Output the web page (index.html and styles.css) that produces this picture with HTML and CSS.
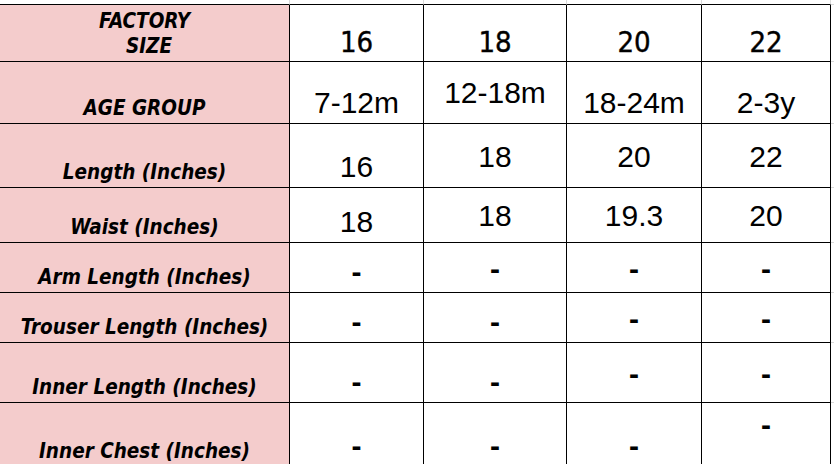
FILE: index.html
```html
<!DOCTYPE html>
<html>
<head>
<meta charset="utf-8">
<link rel="stylesheet" href="styles.css">
</head>
<body>
<div class="sheet">
  <div class="cell top"></div>
  <div class="cell top"></div>
  <div class="cell top"></div>
  <div class="cell top"></div>
  <div class="cell top"></div>
  <div class="cell top edge"></div>

  <div class="cell label">FACTORY<br><span class="indent">SIZE</span></div>
  <div class="cell head">16</div>
  <div class="cell head">18</div>
  <div class="cell head">20</div>
  <div class="cell head">22</div>
  <div class="cell edge"></div>

  <div class="cell label">AGE GROUP</div>
  <div class="cell val">7-12m</div>
  <div class="cell val up15">12-18m</div>
  <div class="cell val">18-24m</div>
  <div class="cell val">2-3y</div>
  <div class="cell edge"></div>

  <div class="cell label">Length (Inches)</div>
  <div class="cell val">16</div>
  <div class="cell val up15">18</div>
  <div class="cell val up15">20</div>
  <div class="cell val up15">22</div>
  <div class="cell edge"></div>

  <div class="cell label">Waist (Inches)</div>
  <div class="cell val">18</div>
  <div class="cell val up11">18</div>
  <div class="cell val up11">19.3</div>
  <div class="cell val up11">20</div>
  <div class="cell edge"></div>

  <div class="cell label">Arm Length (Inches)</div>
  <div class="cell val dash">-</div>
  <div class="cell val dash up8">-</div>
  <div class="cell val dash up8">-</div>
  <div class="cell val dash up8">-</div>
  <div class="cell edge"></div>

  <div class="cell label">Trouser Length (Inches)</div>
  <div class="cell val dash">-</div>
  <div class="cell val dash">-</div>
  <div class="cell val dash up8">-</div>
  <div class="cell val dash up8">-</div>
  <div class="cell edge"></div>

  <div class="cell label">Inner Length (Inches)</div>
  <div class="cell val dash">-</div>
  <div class="cell val dash">-</div>
  <div class="cell val dash up13">-</div>
  <div class="cell val dash up13">-</div>
  <div class="cell edge"></div>

  <div class="cell label">Inner Chest (Inches)</div>
  <div class="cell val dash">-</div>
  <div class="cell val dash">-</div>
  <div class="cell val dash">-</div>
  <div class="cell val dash up26">-</div>
  <div class="cell edge"></div>
</div>
</body>
</html>
```
FILE: styles.css
```css
body {
  margin: 0;
  background: #ffffff;
}

.sheet {
  display: grid;
  grid-template-columns: 290px 134px 143px 135px 129px 1fr;
  grid-template-rows: 5px 57px 62px 64px 55px 50px 50px 60px 64px;
  color: #000;
}

.cell {
  box-sizing: border-box;
  border-right: 1px solid #000;
  border-bottom: 1px solid #000;
  display: flex;
  flex-direction: column;
  justify-content: flex-end;
  align-items: center;
  text-align: center;
  overflow: hidden;
  white-space: nowrap;
}

.top {
  border-right-color: #d9d9d9;
}

.edge {
  border-right: none;
  border-bottom-color: #d9d9d9;
}

.label {
  background: #f4cccc;
  font-family: "DejaVu Sans Condensed", "DejaVu Sans", sans-serif;
  font-weight: bold;
  font-style: italic;
  font-size: 20.5px;
  line-height: 25px;
  padding-bottom: 2px;
}

.indent {
  padding-left: 9px;
}

.head {
  font-family: "DejaVu Sans Condensed", "DejaVu Sans", sans-serif;
  font-size: 29px;
  line-height: 30px;
  padding-bottom: 4px;
  -webkit-text-stroke: 0.4px #000;
}

.val {
  font-family: "Liberation Sans", Arial, sans-serif;
  font-size: 30px;
  line-height: 30px;
  padding-bottom: 5px;
}

.dash {
  font-weight: bold;
}

.up8 { padding-bottom: 8px; }
.up11 { padding-bottom: 11px; }
.up13 { padding-bottom: 13px; }
.up15 { padding-bottom: 15px; }
.up26 { padding-bottom: 26px; }
```
